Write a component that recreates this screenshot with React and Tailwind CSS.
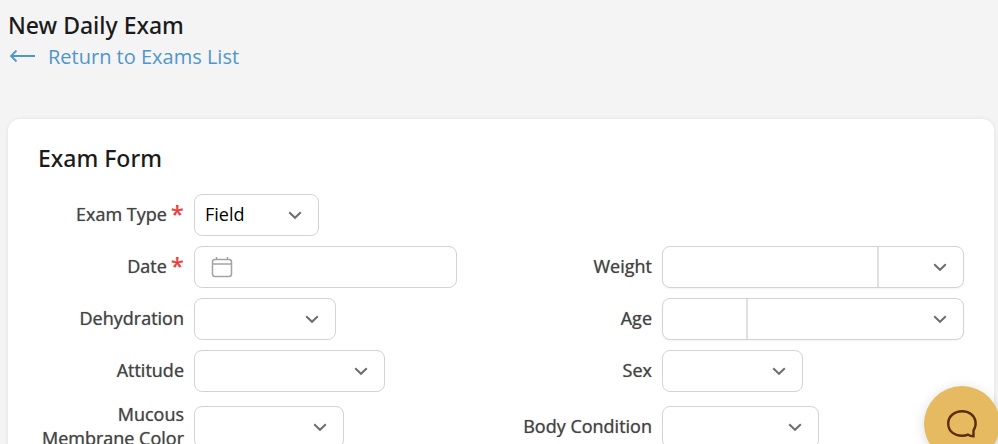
import { useId } from "react"

function Chevron() {
  return (
    <svg
      className="pointer-events-none absolute right-[15px] top-1/2 -translate-y-1/2"
      width="16"
      height="16"
      viewBox="0 0 16 16"
      fill="none"
      stroke="#6e6e6e"
      strokeWidth="2"
      aria-hidden="true"
    >
      <path d="M2.200 5.200 8 10.800l5.800-5.600" />
    </svg>
  )
}

function Select({ id, label, className, options = [""] }) {
  return (
    <div className={`relative h-full ${className}`}>
      <select
        id={id}
        aria-label={label}
        className="h-full w-full appearance-none bg-transparent pb-0.5 pl-[10px] pr-9 text-black outline-none"
      >
        {options.map((option) => (
          <option key={option}>{option}</option>
        ))}
      </select>
      <Chevron />
    </div>
  )
}

function Field({ label, required, boxClass, column, children }) {
  const id = useId()

  return (
    <div className={`flex items-center gap-[10px] ${column ?? ""}`}>
      <label
        htmlFor={id}
        className="flex w-[146px] shrink-0 items-center justify-end gap-1 pb-0.5 text-right text-[#444] [text-shadow:0_0_1px_#777]"
      >
        {label}
        {required && <span className="text-2xl/6 font-semibold text-[#f03e3e] [text-shadow:none]">*</span>}
      </label>
      <div className={`flex h-[42px] min-w-0 rounded-lg border border-[#d3d3d3] bg-white ${boxClass}`}>
        {children(id)}
      </div>
    </div>
  )
}

function CalendarIcon() {
  return (
    <svg width="22" height="22" viewBox="0 0 22 22" fill="none" stroke="#a3a3a3" aria-hidden="true">
      <rect x="1.500" y="3.500" width="19" height="17" rx="2.500" strokeWidth="1.500" />
      <path d="M1.500 8h19" strokeWidth="1.500" />
      <path d="M5.500 3.500V1M16.500 3.500V1" strokeWidth="1.500" />
    </svg>
  )
}

export default function App() {
  return (
    <div className="h-screen overflow-hidden bg-[#f4f4f4] pl-2 pr-1 font-['Open_Sans',sans-serif]">
      <header className="pt-2">
        <h1 className="font-['Noto_Sans',sans-serif] text-[23px]/[34px] font-medium text-[#1b1b1b]">New Daily Exam</h1>
        <a href="#exams" className="flex items-center gap-3 text-xl/[30px] text-[#4f96cc]">
          <svg width="28" height="14" viewBox="0 0 28 14" fill="none" stroke="currentColor" strokeWidth="1.800" aria-hidden="true">
            <path d="M27 6H3M8.500 .5 3 6l5.500 5.500" />
          </svg>
          Return to Exams List
        </a>
      </header>

      <main className="mt-[47px] rounded-xl bg-white px-[30px] pb-8 pt-[22px] shadow-[0_0_4px_rgba(0,0,0,0.08)]">
        <h2 className="font-['Noto_Sans',sans-serif] text-[23px]/[34px] font-medium text-[#1b1b1b]">Exam Form</h2>

        <form className="mt-[19px] grid grid-cols-2 gap-[10px] text-lg/6">
          <Field label="Exam Type" required column="col-start-1" boxClass="w-[125px]">
            {(id) => <Select id={id} className="w-full" options={["Field", "Clinic"]} />}
          </Field>

          <Field label="Date" required column="col-start-1" boxClass="w-[263px] items-center pl-4">
            {(id) => (
              <>
                <CalendarIcon />
                <input id={id} type="text" className="h-full min-w-0 flex-1 px-2 outline-none" />
              </>
            )}
          </Field>
          <Field label="Weight" boxClass="flex-1 shadow-xs">
            {(id) => (
              <>
                <input id={id} type="text" className="h-full min-w-0 flex-1 px-2 outline-none" />
                <Select label="Weight unit" className="w-[86px] border-l-2 border-[#e0e0e0]" />
              </>
            )}
          </Field>

          <Field label="Dehydration" boxClass="w-[142px]">
            {(id) => <Select id={id} className="w-full" />}
          </Field>
          <Field label="Age" boxClass="flex-1 shadow-xs">
            {(id) => (
              <>
                <input id={id} type="text" className="h-full w-[83px] px-2 outline-none" />
                <Select label="Age unit" className="flex-1 border-l-2 border-[#e0e0e0]" />
              </>
            )}
          </Field>

          <Field label="Attitude" boxClass="w-[191px]">
            {(id) => <Select id={id} className="w-full" />}
          </Field>
          <Field label="Sex" boxClass="w-[141px]">
            {(id) => <Select id={id} className="w-full" />}
          </Field>

          <Field label="Mucous Membrane Color" boxClass="w-[150px]">
            {(id) => <Select id={id} className="w-full" />}
          </Field>
          <Field label="Body Condition" boxClass="w-[157px]">
            {(id) => <Select id={id} className="w-full" />}
          </Field>
        </form>
      </main>

      <button
        type="button"
        aria-label="Open chat"
        className="fixed -bottom-[18px] -right-0.5 grid size-[76px] place-items-center rounded-full bg-[#e5ba60] shadow-[0_2px_12px_rgba(0,0,0,0.15)]"
      >
        <svg width="32" height="32" viewBox="0 0 32 32" fill="none" stroke="#5c2e05" strokeWidth="2.400" aria-hidden="true">
          <path d="M27.500 28.300V22.500C29.500 19.500 30 17 29.500 13.500 28.500 7 23 3.200 16 3.200S2.200 8 2.200 15.500 8 27.800 16 27.800c2.500 0 4.300-.4 6-1.200 1.500 1.100 3.200 1.700 5.500 1.700Z" />
        </svg>
      </button>
    </div>
  )
}
